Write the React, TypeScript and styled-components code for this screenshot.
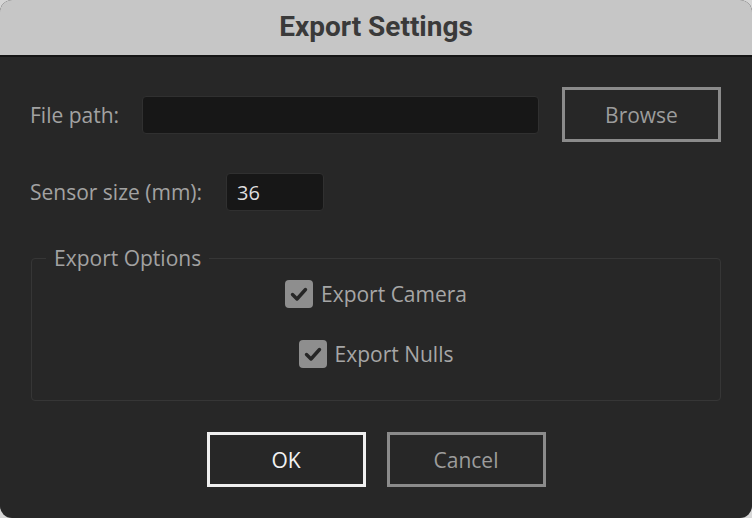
import React from 'react';
import styled, { createGlobalStyle } from 'styled-components';

const GlobalStyle = createGlobalStyle`
  html, body {
    margin: 0;
    padding: 0;
    background: #d6d6d6;
  }
  * {
    box-sizing: border-box;
  }
`;

const Window = styled.div`
  width: 752px;
  height: 518px;
  border-radius: 12px;
  overflow: hidden;
  display: flex;
  flex-direction: column;
  background: #272727;
  font-family: 'Open Sans', 'Noto Sans', sans-serif;
`;

const TitleBar = styled.div`
  height: 57px;
  flex: none;
  background: #c6c6c6;
  border-bottom: 2px solid #151515;
  display: flex;
  align-items: center;
  justify-content: center;
  padding-bottom: 2px;
`;

const Title = styled.h1`
  margin: 0;
  font-family: Roboto, Inter, sans-serif;
  font-weight: 700;
  font-size: 28px;
  color: #3a3a3a;
`;

const Body = styled.div`
  flex: 1;
  display: flex;
  flex-direction: column;
  padding: 30px 31px 0 30px;
`;

const Row = styled.div<{ $gap: number; $mb: number }>`
  display: flex;
  align-items: center;
  gap: ${(p) => p.$gap}px;
  margin-bottom: ${(p) => p.$mb}px;
`;

const Label = styled.span`
  font-size: 21px;
  color: #a2a2a2;
  white-space: nowrap;
`;

const TextInput = styled.div<{ $w?: number }>`
  height: 38px;
  ${(p) => (p.$w ? `width: ${p.$w}px;` : 'flex: 1;')}
  background: #171717;
  border: 1px solid #303030;
  border-radius: 4px;
  display: flex;
  align-items: center;
  padding: 0 10px;
  font-size: 20px;
  color: #dedede;
`;

const Button = styled.button<{ $primary?: boolean }>`
  width: 159px;
  height: 55px;
  flex: none;
  background: transparent;
  border: 3px solid ${(p) => (p.$primary ? '#efefef' : '#8b8b8b')};
  color: ${(p) => (p.$primary ? '#f2f2f2' : '#9c9c9c')};
  font-family: 'Open Sans', 'Noto Sans', sans-serif;
  font-size: 21px;
  padding: 0;
  cursor: default;
`;

const Group = styled.fieldset`
  margin: 0 0 31px 1px;
  padding: 8px 0 32px;
  border: 1px solid #363636;
  border-radius: 4px;
  display: flex;
  flex-direction: column;
  align-items: center;
  gap: 32px;
`;

const Legend = styled.legend`
  margin-left: 14px;
  padding: 0 8px;
  font-size: 21px;
  line-height: 28px;
  color: #a2a2a2;
`;

const CheckRow = styled.label`
  display: flex;
  align-items: center;
  gap: 8px;
  height: 28px;
  font-size: 21px;
  color: #a6a6a6;
`;

const Box = styled.span`
  width: 28px;
  height: 28px;
  border-radius: 4px;
  background: #8e8e8e;
  display: flex;
  align-items: center;
  justify-content: center;
`;

const Buttons = styled.div`
  display: flex;
  justify-content: center;
  gap: 21px;
  padding-left: 1px;
`;

function Check({ label }: { label: string }) {
  return (
    <CheckRow>
      <Box>
        <svg width="28" height="28" viewBox="0 0 28 28">
          <path
            d="M7.5 14.5 L12 19 L20.5 9.5"
            fill="none"
            stroke="#262626"
            strokeWidth="3.4"
            strokeLinecap="round"
            strokeLinejoin="round"
          />
        </svg>
      </Box>
      {label}
    </CheckRow>
  );
}

export default function App() {
  return (
    <>
      <GlobalStyle />
      <Window>
        <TitleBar>
          <Title>Export Settings</Title>
        </TitleBar>
        <Body>
          <Row $gap={23} $mb={31}>
            <Label>File path:</Label>
            <TextInput />
            <Button>Browse</Button>
          </Row>
          <Row $gap={24} $mb={33}>
            <Label>Sensor size (mm):</Label>
            <TextInput $w={98}>36</TextInput>
          </Row>
          <Group>
            <Legend>Export Options</Legend>
            <Check label="Export Camera" />
            <Check label="Export Nulls" />
          </Group>
          <Buttons>
            <Button $primary>OK</Button>
            <Button>Cancel</Button>
          </Buttons>
        </Body>
      </Window>
    </>
  );
}
